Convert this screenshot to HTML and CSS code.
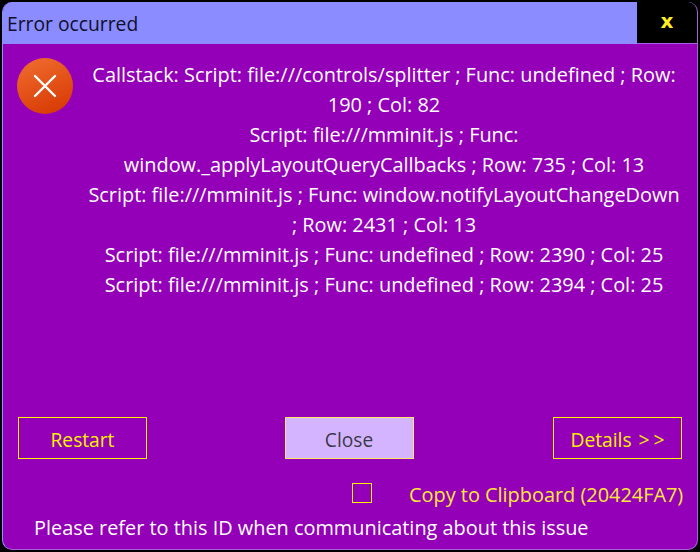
FILE: index.html
```html
<!DOCTYPE html>
<html lang="en">
<head>
  <meta charset="UTF-8">
  <title>Error occurred</title>
  <link rel="stylesheet" href="styles.css">
</head>
<body>
  <div class="window">
    <div class="titlebar">
      <span class="title">Error occurred</span>
      <button class="close-x">x</button>
    </div>
    <div class="content">
      <div class="message-row">
        <svg class="error-icon" width="56" height="56" viewBox="0 0 56 56">
          <defs>
            <linearGradient id="errGrad" x1="0.3" y1="0" x2="0.7" y2="1">
              <stop offset="0" stop-color="#ee6a2c"/>
              <stop offset="1" stop-color="#d83a04"/>
            </linearGradient>
          </defs>
          <circle cx="28" cy="28" r="28" fill="url(#errGrad)"/>
          <path d="M18 18 L38 38 M38 18 L18 38" stroke="#fff" stroke-width="2.4" stroke-linecap="round"/>
        </svg>
        <div class="message">
          Callstack: Script: file:///controls/splitter ; Func: undefined ; Row: 190 ; Col: 82<br>
          Script: file:///mminit.js ; Func: window._applyLayoutQueryCallbacks ; Row: 735 ; Col: 13<br>
          Script: file:///mminit.js ; Func: window.notifyLayoutChangeDown ; Row: 2431 ; Col: 13<br>
          Script: file:///mminit.js ; Func: undefined ; Row: 2390 ; Col: 25<br>
          Script: file:///mminit.js ; Func: undefined ; Row: 2394 ; Col: 25
        </div>
      </div>
      <div class="buttons">
        <button class="btn">Restart</button>
        <button class="btn btn-primary">Close</button>
        <button class="btn">Details <span class="arrows">&gt;&gt;</span></button>
      </div>
      <div class="clipboard">
        <span class="checkbox"></span>
        <span class="clipboard-label">Copy to Clipboard (20424FA7)</span>
      </div>
      <div class="note">Please refer to this ID when communicating about this issue</div>
    </div>
  </div>
</body>
</html>
```

FILE: styles.css
```css
html, body {
  height: 100%;
}
body {
  margin: 0;
  background: #000;
  font-family: "Open Sans", "Noto Sans", sans-serif;
  font-size: 19.9px;
  overflow: hidden;
}
.window {
  box-sizing: border-box;
  width: 696px;
  height: 548px;
  margin: 2px 0 0 2px;
  display: flex;
  flex-direction: column;
  background: #9400b8;
  border-radius: 10px;
  border-left: 1px solid #8a8cff;
  border-right: 1px solid #a860e0;
  border-bottom: 1px solid #a860e0;
  overflow: hidden;
}
.titlebar {
  height: 42px;
  flex-shrink: 0;
  display: flex;
  background: #8a8cff;
}
.title {
  flex: 1;
  padding: 7px 0 0 4px;
  font-size: 19.3px;
  line-height: 30px;
  color: #10102a;
}
.close-x {
  width: 60px;
  border: none;
  border-bottom: 1px solid #a860e0;
  background: #000;
  color: #ffee22;
  font: bold 20px "DejaVu Sans", sans-serif;
  padding: 0 0 3px;
}
.content {
  flex: 1;
  display: flex;
  flex-direction: column;
  padding: 0 15px 6px 15px;
  color: #fff;
}
.message-row {
  flex: 1;
  display: flex;
  padding-top: 14px;
}
.error-icon {
  flex-shrink: 0;
  margin-left: -1px;
}
.message {
  width: 600px;
  margin: 2px 0 0 13px;
  text-align: center;
  line-height: 30px;
}
.buttons {
  display: flex;
  justify-content: space-between;
}
.btn {
  box-sizing: border-box;
  width: 129px;
  height: 42px;
  border: 1px solid #fff200;
  background: transparent;
  color: #fff200;
  font: inherit;
  font-size: 19.2px;
  padding: 2px 0 0;
}
.arrows {
  letter-spacing: 4px;
  margin-left: 2px;
  margin-right: -4px;
}
.btn-primary {
  margin-right: 2px;
  background: #d4b4ff;
  border-color: #ffe86a;
  color: #3a3a4a;
}
.clipboard {
  display: flex;
  align-items: center;
  margin-top: 21px;
  padding-left: 334px;
  color: #ffe83a;
  height: 30px;
}
.checkbox {
  flex-shrink: 0;
  box-sizing: border-box;
  width: 20px;
  height: 20px;
  margin-bottom: 4px;
  border: 1px solid #fff200;
}
.clipboard-label {
  margin: 0 0 2px 37px;
  white-space: nowrap;
}
.note {
  margin-top: 3px;
  padding-left: 16px;
  line-height: 30px;
}
```
